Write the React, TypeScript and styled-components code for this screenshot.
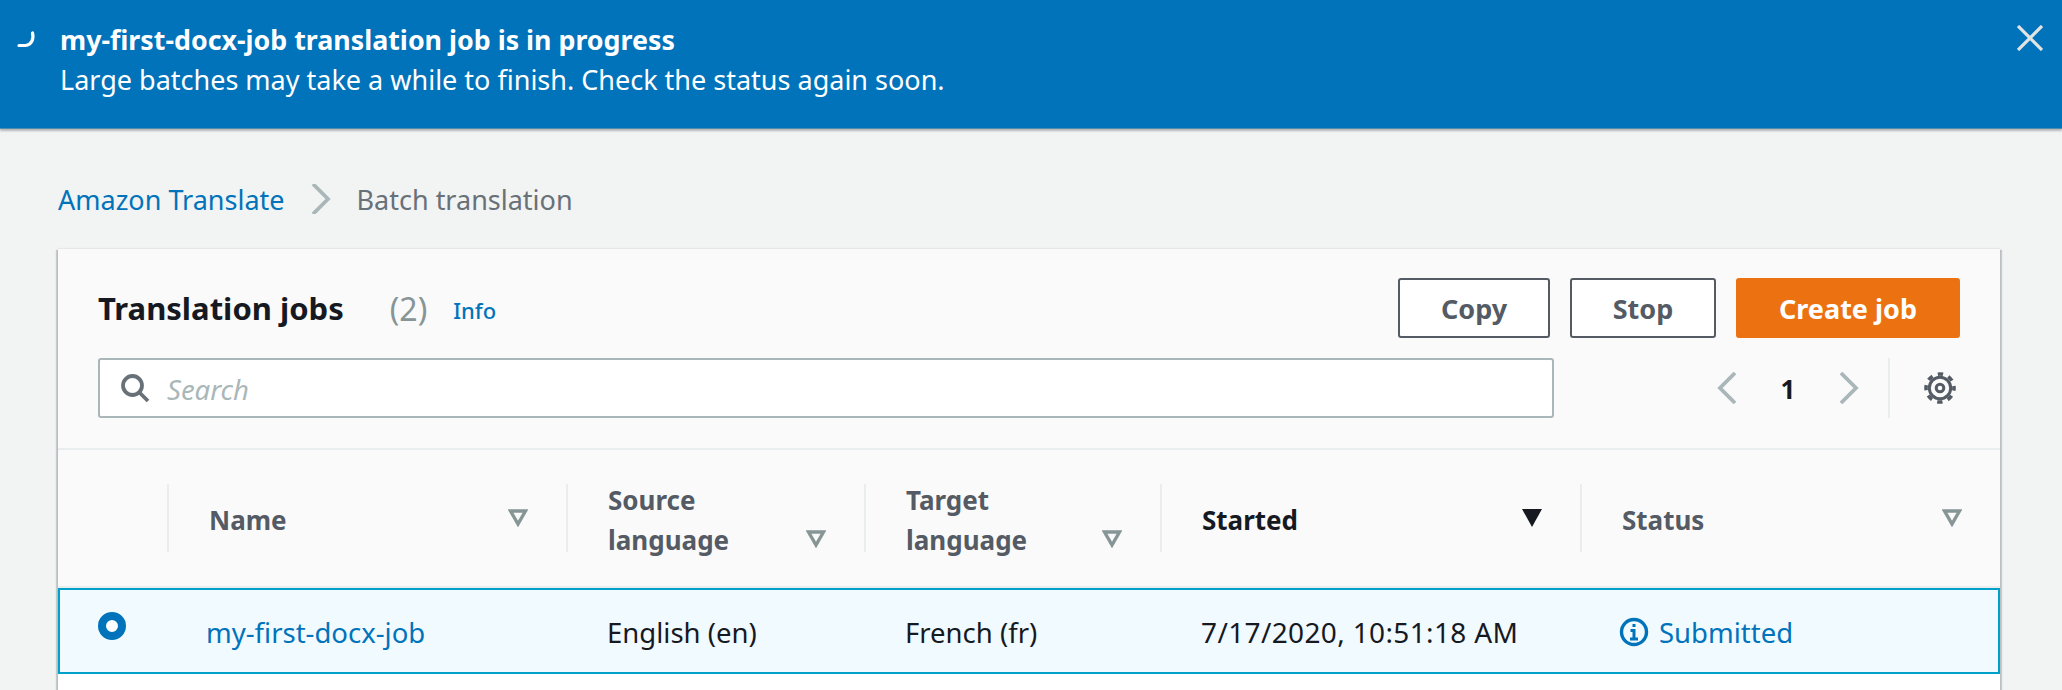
import React from 'react';
import styled, { createGlobalStyle } from 'styled-components';

const GlobalStyle = createGlobalStyle`
  html, body {
    margin: 0;
    height: 690px;
    overflow: hidden;
    background: #f2f3f3;
    font-family: "Noto Sans", "Liberation Sans", sans-serif;
    color: #16191f;
  }
  * { box-sizing: border-box; }
`;

const Banner = styled.div`
  height: 129px;
  background: #0073bb;
  color: #fff;
  display: flex;
  align-items: flex-start;
  border-bottom: 1px solid #4f8db0;
  box-shadow: 0 2px 2px rgba(0, 0, 0, 0.25);
  padding: 20px 19px 0 16px;
  position: relative;
`;

const Spinner = styled.svg`
  width: 20px;
  height: 20px;
  margin-top: 11px;
  flex: none;
`;

const BannerText = styled.div`
  flex: 1;
  margin-left: 24px;
  font-size: 27px;
  line-height: 40px;
`;

const BannerTitle = styled.div`
  font-weight: 700;
  font-size: 26.8px;
`;

const CloseIcon = styled.svg`
  width: 26px;
  height: 26px;
  margin-top: 5px;
  flex: none;
`;

const Crumbs = styled.nav`
  display: flex;
  align-items: center;
  height: 30px;
  margin: 55px 0 35px 58px;
  font-size: 27px;
`;

const CrumbLink = styled.span`
  color: #0073bb;
`;

const CrumbSep = styled.svg`
  width: 20px;
  height: 30px;
  margin: 0 26px 0 26px;
`;

const CrumbCurrent = styled.span`
  color: #687078;
`;

const Card = styled.section`
  margin: 0 62px 0 58px;
  height: 460px;
  background: #fff;
  box-shadow: 0 1px 1px 0 rgba(0, 28, 36, 0.3), 2px 1px 1px 0 rgba(0, 28, 36, 0.18), -2px 1px 1px 0 rgba(0, 28, 36, 0.18), 0 -1px 1px 0 rgba(0, 28, 36, 0.05);
`;

const CardHead = styled.div`
  background: #fafafa;
  height: 201px;
  padding: 29px 40px 0;
  border-bottom: 2px solid #eaeded;
`;

const TopRow = styled.div`
  display: flex;
  align-items: center;
  height: 60px;
`;

const Title = styled.h1`
  margin: 0;
  font-size: 31px;
  font-weight: 700;
  line-height: 60px;
`;

const Count = styled.span`
  margin-left: 46px;
  font-size: 32px;
  color: #879596;
`;

const InfoLink = styled.span`
  margin-left: 26px;
  font-size: 22px;
  font-weight: 500;
  color: #0073bb;
  position: relative;
  top: 2px;
`;

const Actions = styled.div`
  margin-left: auto;
  display: flex;
  gap: 20px;
`;

const Button = styled.button<{ $primary?: boolean; $w: number }>`
  width: ${p => p.$w}px;
  height: 60px;
  border-radius: 3px;
  border: 2px solid ${p => (p.$primary ? '#ec7211' : '#545b64')};
  background: ${p => (p.$primary ? '#ec7211' : '#fff')};
  color: ${p => (p.$primary ? '#fff' : '#545b64')};
  font: 700 27px "Noto Sans", sans-serif;
  padding: 0;
`;

const SearchRow = styled.div`
  display: flex;
  align-items: center;
  height: 60px;
  margin-top: 20px;
`;

const SearchBox = styled.div`
  width: 1456px;
  height: 60px;
  background: #fff;
  border: 2px solid #aab7b8;
  border-radius: 3px;
  display: flex;
  align-items: center;
  padding-left: 20px;
  gap: 17px;
`;

const Placeholder = styled.span`
  font-size: 27.500px;
  font-style: italic;
  color: #aab7b8;
  padding-top: 2px;
`;

const Pager = styled.div`
  margin-left: auto;
  margin-right: 4px;
  display: flex;
  align-items: center;
  height: 60px;
`;

const PageNum = styled.span`
  width: 102px;
  text-align: center;
  font-size: 26px;
  font-weight: 700;
  padding-top: 2px;
`;

const PagerSep = styled.div`
  width: 2px;
  height: 60px;
  margin: 0 34px 0 29px;
  background: #eaeded;
`;

const Columns = styled.div`
  display: grid;
  grid-template-columns: 109px 399px 298px 296px 420px 1fr;
`;

const HeadRow = styled(Columns)`
  height: 138px;
  background: #fafafa;
  border-bottom: 2px solid #eaeded;
  align-items: center;
`;

const HeadCell = styled.div<{ $active?: boolean }>`
  height: 68px;
  border-left: 2px solid #eaeded;
  padding: 3px 38px 0 40px;
  display: flex;
  justify-content: space-between;
  align-items: center;
  font-size: 26px;
  font-weight: 700;
  line-height: 40px;
  color: ${p => (p.$active ? '#16191f' : '#545b64')};
`;

const SortIcon = styled.svg<{ $bottom?: boolean }>`
  width: 20px;
  height: 18px;
  flex: none;
  align-self: ${p => (p.$bottom ? 'flex-end' : 'center')};
  margin-bottom: 4px;
`;

const EmptyHead = styled.div``;

const BodyRow = styled(Columns)`
  height: 86px;
  background: #f1faff;
  outline: 2px solid #00a1c9;
  outline-offset: -2px;
  align-items: center;
  font-size: 27.500px;
`;

const RadioCell = styled.div`
  padding-left: 40px;
  display: flex;
  margin-top: -10px;
`;

const Radio = styled.span`
  width: 28px;
  height: 28px;
  border-radius: 50%;
  border: 8.500px solid #0073bb;
  background: #fff;
`;

const BodyCell = styled.div`
  padding: 2px 0 0 41px;
`;

const NameCell = styled(BodyCell)`
  color: #0073bb;
  padding-left: 39px;
`;

const DateCell = styled(BodyCell)`
  font-size: 28px;
  letter-spacing: 0.36px;
`;

const StatusCell = styled(BodyCell)`
  color: #0073bb;
  display: flex;
  align-items: center;
  gap: 10px;
  padding-left: 39px;
`;

const SortCaret = ({ bottom, active }: { bottom?: boolean; active?: boolean }) => (
  <SortIcon $bottom={bottom} viewBox="0 0 20 18">
    {active ? (
      <path d="M0 0h20l-10 18z" fill="#16191f" />
    ) : (
      <path d="M2.500 2h15l-7.500 13z" fill="none" stroke="#879596" strokeWidth="3.400" strokeLinejoin="miter" />
    )}
  </SortIcon>
);

const Chevron = ({ left }: { left?: boolean }) => (
  <svg width="20" height="32" viewBox="0 0 20 32">
    <path
      d={left ? 'M18 1 3 16l15 15' : 'M2 1l15 15L2 31'}
      fill="none"
      stroke="#aab7b8"
      strokeWidth="3.800"
    />
  </svg>
);

const App: React.FC = () => {
  return (
    <>
      <GlobalStyle />
      <Banner>
        <Spinner viewBox="0 0 20 20">
          <path d="M16.500 1c1.600 6-1 12-7 12.500H3" fill="none" stroke="#fff" strokeWidth="3.200" strokeLinecap="round" transform="translate(0 1)" />
        </Spinner>
        <BannerText>
          <BannerTitle>my-first-docx-job translation job is in progress</BannerTitle>
          <div>Large batches may take a while to finish. Check the status again soon.</div>
        </BannerText>
        <CloseIcon viewBox="0 0 26 26">
          <path d="M1 1l24 24M25 1 1 25" stroke="#e2e4e4" strokeWidth="3.200" fill="none" />
        </CloseIcon>
      </Banner>
      <Crumbs>
        <CrumbLink>Amazon Translate</CrumbLink>
        <CrumbSep viewBox="0 0 20 30">
          <path d="M2 0l15 15L2 30" fill="none" stroke="#aab7b8" strokeWidth="3.800" />
        </CrumbSep>
        <CrumbCurrent>Batch translation</CrumbCurrent>
      </Crumbs>
      <Card>
        <CardHead>
          <TopRow>
            <Title>Translation jobs</Title>
            <Count>(2)</Count>
            <InfoLink>Info</InfoLink>
            <Actions>
              <Button $w={152}>Copy</Button>
              <Button $w={146}>Stop</Button>
              <Button $w={224} $primary>Create job</Button>
            </Actions>
          </TopRow>
          <SearchRow>
            <SearchBox>
              <svg width="30" height="30" viewBox="0 0 30 30">
                <circle cx="12.500" cy="12.500" r="9.500" fill="none" stroke="#687078" strokeWidth="3.800" />
                <path d="M19 19l9 9" stroke="#687078" strokeWidth="3.800" fill="none" />
              </svg>
              <Placeholder>Search</Placeholder>
            </SearchBox>
            <Pager>
              <Chevron left />
              <PageNum>1</PageNum>
              <Chevron />
              <PagerSep />
              <svg width="32" height="32" viewBox="0 0 32 32" fill="none" stroke="#545b64">
                <circle cx="16" cy="16" r="10.700" strokeWidth="3" />
                <circle cx="16" cy="16" r="14" strokeWidth="3.600" strokeDasharray="5.400 5.600" strokeDashoffset="2.700" />
                <circle cx="16" cy="16" r="3.800" strokeWidth="3" />
              </svg>
            </Pager>
          </SearchRow>
        </CardHead>
        <HeadRow>
          <EmptyHead />
          <HeadCell>Name<SortCaret /></HeadCell>
          <HeadCell>
            <span>Source<br />language</span>
            <SortCaret bottom />
          </HeadCell>
          <HeadCell>
            <span>Target<br />language</span>
            <SortCaret bottom />
          </HeadCell>
          <HeadCell $active>Started<SortCaret active /></HeadCell>
          <HeadCell>Status<SortCaret /></HeadCell>
        </HeadRow>
        <BodyRow>
          <RadioCell><Radio /></RadioCell>
          <NameCell>my-first-docx-job</NameCell>
          <BodyCell>English (en)</BodyCell>
          <BodyCell>French (fr)</BodyCell>
          <DateCell>7/17/2020, 10:51:18 AM</DateCell>
          <StatusCell>
            <svg width="30" height="30" viewBox="0 0 30 30">
              <circle cx="15" cy="15" r="12.500" fill="none" stroke="#0073bb" strokeWidth="3.400" />
              <path d="M15 7v3M11.500 13.500H15V22M11 22h8" fill="none" stroke="#0073bb" strokeWidth="3" />
            </svg>
            Submitted
          </StatusCell>
        </BodyRow>
      </Card>
    </>
  );
};

export default App;
